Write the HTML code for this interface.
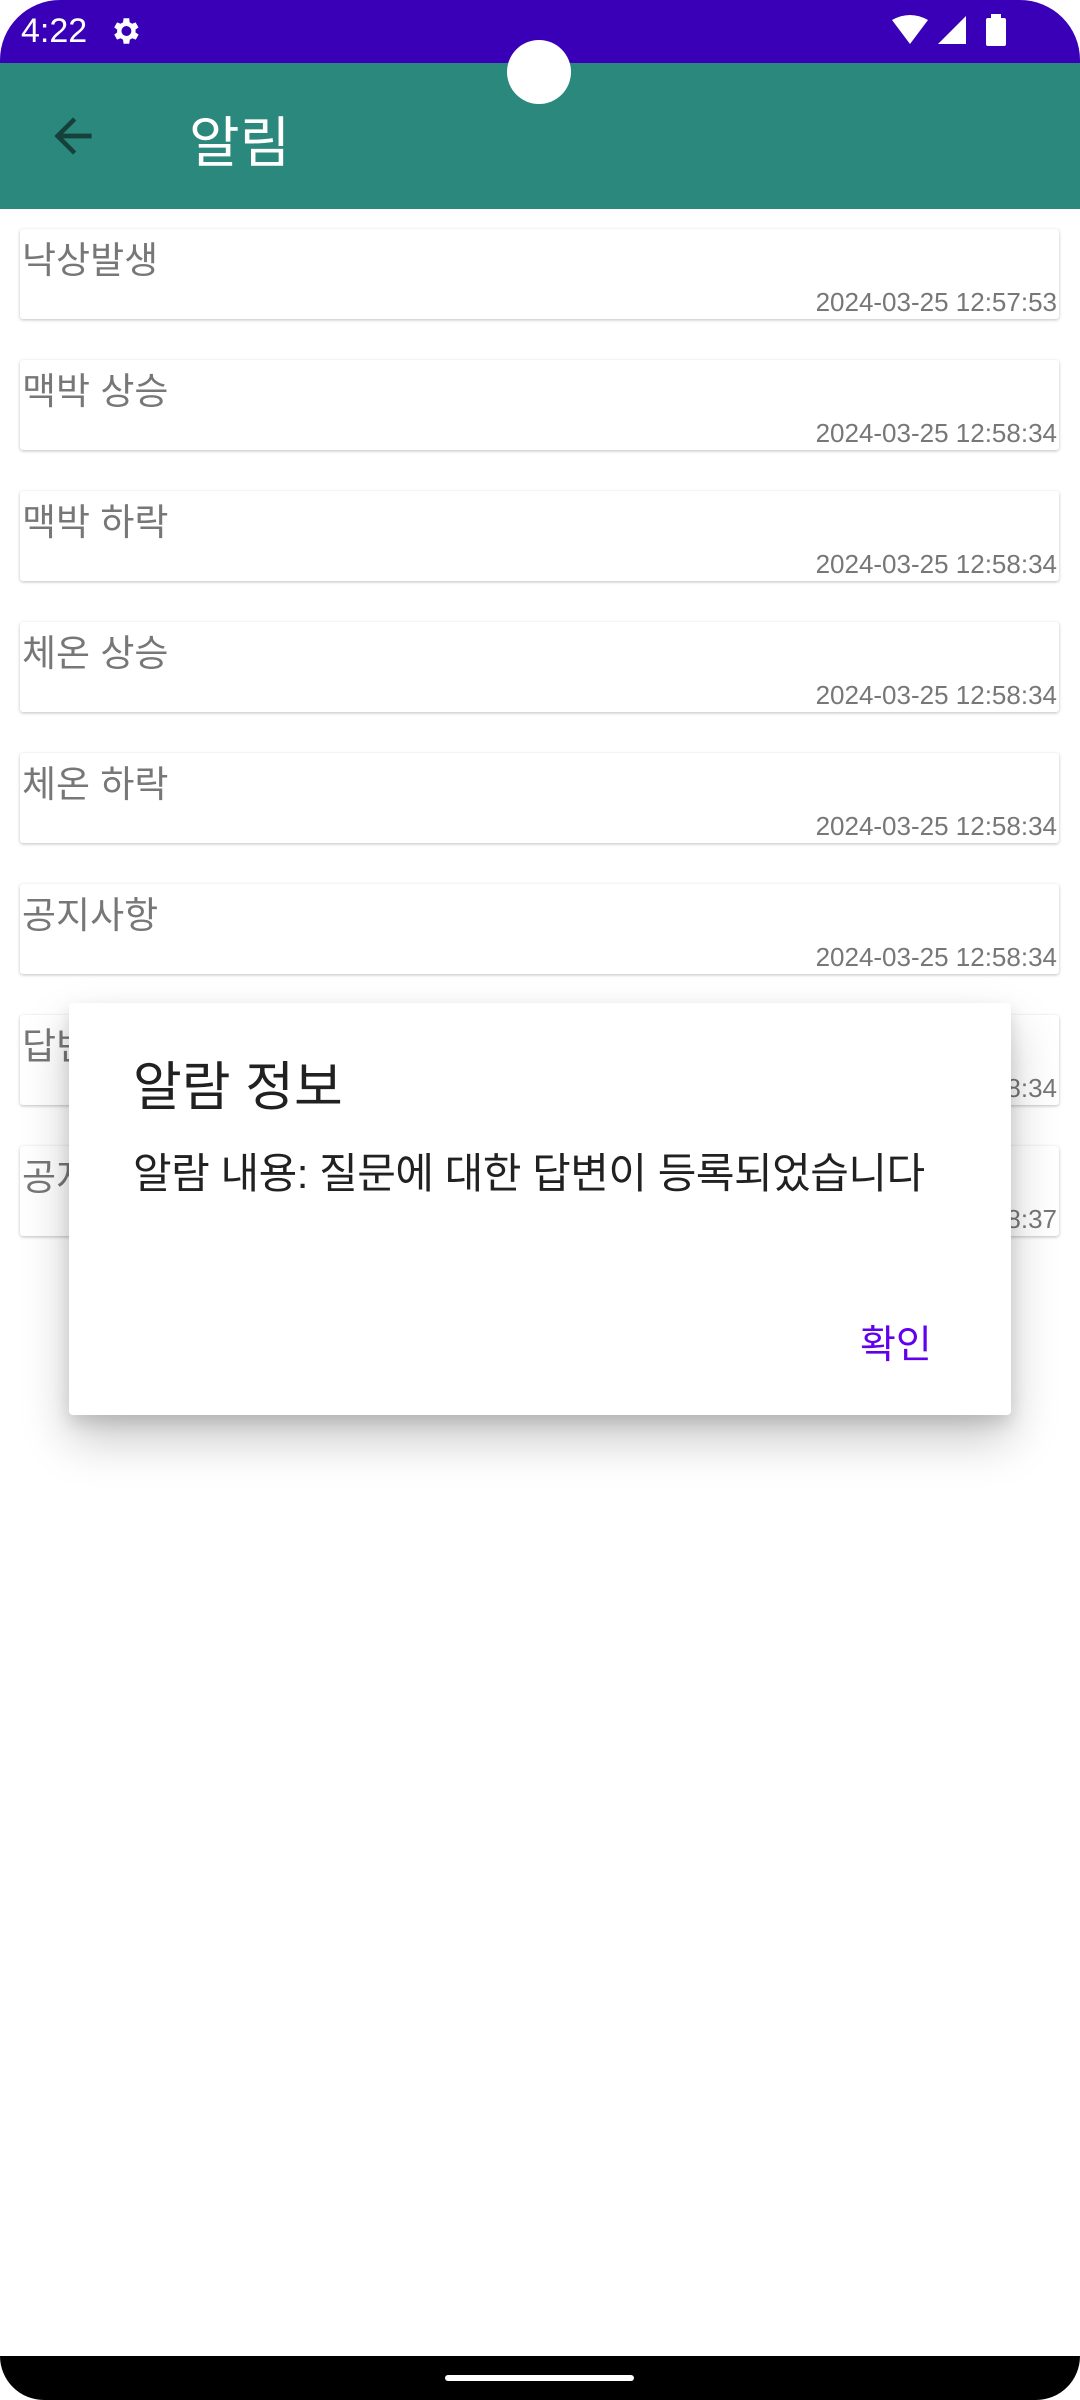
<!DOCTYPE html>
<html><head><meta charset="utf-8"><style>
*{margin:0;padding:0;box-sizing:border-box}
body{width:1080px;height:2400px;background:#fff;position:relative;overflow:hidden;font-family:"Liberation Sans","Noto Sans CJK KR",sans-serif}
.sb{position:absolute;left:0;top:0;width:1080px;height:63px;background:#3a00b8;border-radius:60px 60px 0 0}
.tb{position:absolute;left:0;top:63px;width:1080px;height:146px;background:#2b887d}
.cam{position:absolute;left:507px;top:40px;width:64px;height:64px;border-radius:50%;background:#fff}
.card{position:absolute;left:20px;width:1039px;height:90px;background:#fff;border-radius:3px;box-shadow:0 1px 3px rgba(0,0,0,.25)}
.card .t{position:absolute;left:2px;top:1px;font-size:37px;color:#777}
.card .d{position:absolute;right:2px;bottom:1px;font-size:26px;color:#777}
.dlg{position:absolute;left:69px;top:1003px;width:942px;height:412px;background:#fff;border-radius:4px;box-shadow:0 24px 48px rgba(0,0,0,.22),0 8px 16px rgba(0,0,0,.12)}
.nav{position:absolute;left:0;top:2356px;width:1080px;height:44px;background:#000;border-radius:0 0 60px 60px}
</style></head><body>
<div class="sb"></div>
<div style="position:absolute;left:21px;top:12px;color:#fff;font-size:34px">4:22</div>
<svg style="position:absolute;left:108px;top:14px" width="34" height="34" viewBox="0 0 24 24"><path fill="#fff" d="M19.4 13a7.5 7.5 0 000-2l2.1-1.6-2-3.5-2.5 1a7 7 0 00-1.7-1L15 3h-4l-.4 2.9a7 7 0 00-1.7 1l-2.5-1-2 3.5L6.5 11a7.5 7.5 0 000 2l-2.1 1.6 2 3.5 2.5-1a7 7 0 001.7 1L11 21h4l.4-2.9a7 7 0 001.7-1l2.5 1 2-3.5zM13 15.5a3.5 3.5 0 110-7 3.5 3.5 0 010 7z"/></svg>
<svg style="position:absolute;left:890px;top:14px" width="120" height="34" viewBox="0 0 120 34"><path fill="#fff" d="M2 6Q20-4 38 6L20 30z"/><path fill="#fff" d="M48 30L76 2V30z"/><rect x="96" y="4" width="20" height="28" rx="2" fill="#fff"/><rect x="101" y="0" width="10" height="5" fill="#fff"/></svg>
<div class="tb"></div>
<div class="cam"></div>
<svg style="position:absolute;left:45px;top:108px" width="56" height="56" viewBox="0 0 24 24"><path fill="#16413b" d="M20 11H7.8l5.6-5.6L12 4l-8 8 8 8 1.4-1.4L7.8 13H20z"/></svg>
<div style="position:absolute;left:189px;top:98px;color:#fff;font-size:55px">알림</div>
<div class="card" style="top:229px"><div class="t">낙상발생</div><div class="d">2024-03-25 12:57:53</div></div>
<div class="card" style="top:360px"><div class="t">맥박 상승</div><div class="d">2024-03-25 12:58:34</div></div>
<div class="card" style="top:491px"><div class="t">맥박 하락</div><div class="d">2024-03-25 12:58:34</div></div>
<div class="card" style="top:622px"><div class="t">체온 상승</div><div class="d">2024-03-25 12:58:34</div></div>
<div class="card" style="top:753px"><div class="t">체온 하락</div><div class="d">2024-03-25 12:58:34</div></div>
<div class="card" style="top:884px"><div class="t">공지사항</div><div class="d">2024-03-25 12:58:34</div></div>
<div class="card" style="top:1015px"><div class="t">답변</div><div class="d">2024-03-25 12:58:34</div></div>
<div class="card" style="top:1146px"><div class="t">공지</div><div class="d">2024-03-25 12:58:37</div></div>
<div class="dlg">
<div style="position:absolute;left:64px;top:42px;font-size:53px;color:#212121">알람 정보</div>
<div style="position:absolute;left:64px;top:137px;font-size:42px;letter-spacing:-0.5px;color:#212121;white-space:nowrap">알람 내용: 질문에 대한 답변이 등록되었습니다</div>
<div style="position:absolute;left:791px;top:311px;font-size:39px;color:#6200ee">확인</div>
</div>
<div class="nav"></div>
<div style="position:absolute;left:445px;top:2375px;width:189px;height:6px;border-radius:3px;background:#fff"></div>
</body></html>
